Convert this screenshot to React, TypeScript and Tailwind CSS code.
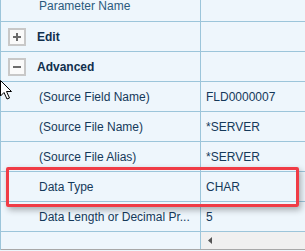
import React from 'react'

const font = { fontFamily: '"Liberation Sans", Arial, sans-serif' }

type Row = { label: string; value?: string; kind?: 'plus' | 'minus' }

const rows: Row[] = [
  { label: 'Edit', kind: 'plus' },
  { label: 'Advanced', kind: 'minus' },
  { label: '(Source Field Name)', value: 'FLD0000007' },
  { label: '(Source File Name)', value: '*SERVER' },
  { label: '(Source File Alias)', value: '*SERVER' },
  { label: 'Data Type', value: 'CHAR' },
  { label: 'Data Length or Decimal Pr...', value: '5' },
]

function Toggle({ kind }: { kind: 'plus' | 'minus' }) {
  return (
    <div className="flex h-[18px] w-[18px] items-center justify-center border-2 border-[#c8c8c8] bg-[#fafafa]">
      <svg width="10" height="10" viewBox="0 0 10 10">
        <rect x="1" y="4" width="8" height="2" fill="#6b6b6b" />
        {kind === 'plus' && <rect x="4" y="1" width="2" height="8" fill="#6b6b6b" />}
      </svg>
    </div>
  )
}

export default function App() {
  return (
    <div
      className="relative h-[251px] w-[305px] overflow-hidden bg-[#eef6fc] text-[12px] text-[#15395a]"
      style={font}
    >
      <div className="flex flex-col border-l border-[#9cc5da]">
        <div className="flex h-[22px] border-b border-[#9cc5da]">
          <div className="w-[200px] border-r border-[#9cc5da] pl-[38px] leading-[12px] text-[#2b5a7c]">
            Parameter Name
          </div>
          <div className="flex-1" />
        </div>
        {rows.map((r) => (
          <div key={r.label} className="flex h-[30px] border-b border-[#9cc5da]">
            <div className="flex w-[200px] items-center border-r border-[#9cc5da]">
              {r.kind ? (
                <>
                  <div className="ml-[7px] mr-[11px]">
                    <Toggle kind={r.kind} />
                  </div>
                  <span className="font-bold text-[#102f4d]">{r.label}</span>
                </>
              ) : (
                <span className="pl-[38px] whitespace-nowrap">{r.label}</span>
              )}
            </div>
            <div className="flex flex-1 items-center pl-[5px]">{r.value}</div>
          </div>
        ))}
        <div className="flex h-[18px] border-b border-[#a8a8a8]">
          <div className="w-[200px] border-r border-[#9cc5da]" />
          <div className="flex flex-1 items-center bg-[#f0f0f0] pl-[7px]">
            <svg width="4" height="7" viewBox="0 0 4 7">
              <polygon points="4,0 0,3.5 4,7" fill="#555" />
            </svg>
          </div>
        </div>
      </div>

      <div className="absolute left-[6px] top-[167px] h-[40px] w-[293px] rounded-[2px] border-[3px] border-[#f03c46] shadow-[2px_3px_6px_rgba(0,0,0,0.3)]" />

      <svg className="absolute left-0 top-[80px]" width="14" height="21" viewBox="0 0 14 21">
        <path d="M0.5 0.5 L0.5 16 L4 12.5 L7 19 L9.5 18 L6.5 11.5 L11.5 11.5 Z" fill="#fff" stroke="#000" strokeWidth="1" />
      </svg>
    </div>
  )
}
